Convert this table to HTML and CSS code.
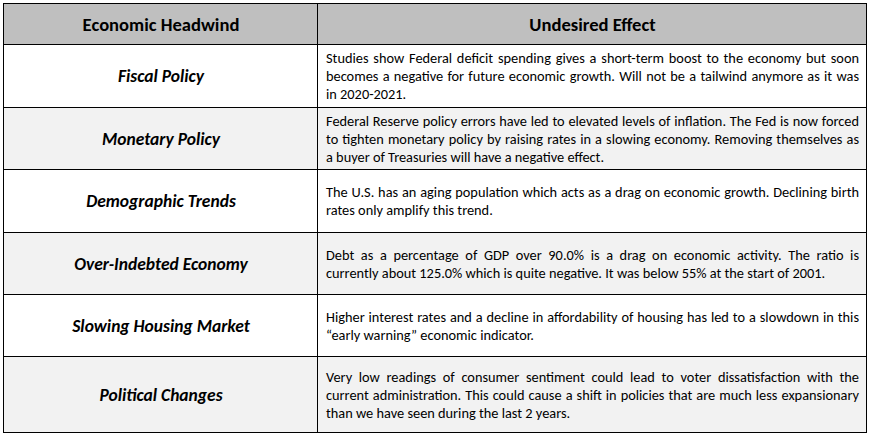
FILE: index.html
```html
<!DOCTYPE html>
<html>
<head>
<meta charset="utf-8">
<link rel="stylesheet" href="styles.css">
</head>
<body>
<table class="grid">
  <colgroup><col class="c1"><col class="c2"></colgroup>
  <thead>
    <tr class="head"><th>Economic Headwind</th><th>Undesired Effect</th></tr>
  </thead>
  <tbody>
    <tr class="r1"><td class="name">Fiscal Policy</td><td class="desc">Studies show Federal deficit spending gives a short-term boost to the economy but soon becomes a negative for future economic growth. Will not be a tailwind anymore as it was in&nbsp;2020-2021.</td></tr>
    <tr class="r2 alt"><td class="name">Monetary Policy</td><td class="desc">Federal Reserve policy errors have led to elevated levels of inflation. The Fed is now forced to tighten monetary policy by raising rates in a slowing economy. Removing themselves as a&nbsp;buyer of Treasuries will have a negative effect.</td></tr>
    <tr class="r3"><td class="name">Demographic Trends</td><td class="desc">The U.S. has an aging population which acts as a drag on economic growth. Declining birth rates only amplify this trend.</td></tr>
    <tr class="r4 alt"><td class="name">Over-Indebted Economy</td><td class="desc">Debt as a percentage of GDP over 90.0% is a drag on economic activity. The ratio is currently about 125.0% which is quite negative. It was below 55% at the start of 2001.</td></tr>
    <tr class="r5"><td class="name">Slowing Housing Market</td><td class="desc">Higher interest rates and a decline in affordability of housing has led to a slowdown in this “early warning” economic indicator.</td></tr>
    <tr class="r6 alt"><td class="name">Political Changes</td><td class="desc">Very low readings of consumer sentiment could lead to voter dissatisfaction with the current administration. This could cause a shift in policies that are much less expansionary than we have seen during the last 2 years.</td></tr>
  </tbody>
</table>
</body>
</html>
```
FILE: styles.css
```css
html, body {
  margin: 0;
  padding: 0;
  background: #ffffff;
}
body {
  padding: 3px 0 0 3px;
  font-family: Carlito, Calibri, Lato, sans-serif;
  color: #000;
}
.grid {
  border-collapse: collapse;
  table-layout: fixed;
  width: 863px;
}
.c1 { width: 314px; }
.c2 { width: 549px; }
.grid th, .grid td {
  border: 1.5px solid #000;
  padding: 0 7px 0 8px;
}
.head th {
  background: #bfbfbf;
  font-size: 18.6px;
  font-weight: bold;
  height: 40px;
  text-align: center;
  vertical-align: middle;
}
.alt td { background: #f2f2f2; }
.name {
  text-align: center;
  font-weight: bold;
  font-style: italic;
  font-size: 17.5px;
}
.desc {
  text-align: justify;
  font-size: 14.35px;
  line-height: 18px;
  padding-top: 4px;
}
.r1 td { height: 62px; }
.r2 td { height: 61px; }
.r3 td { height: 62px; }
.r4 td { height: 61px; }
.r5 td { height: 61px; }
.r6 td { height: 75px; }
```
